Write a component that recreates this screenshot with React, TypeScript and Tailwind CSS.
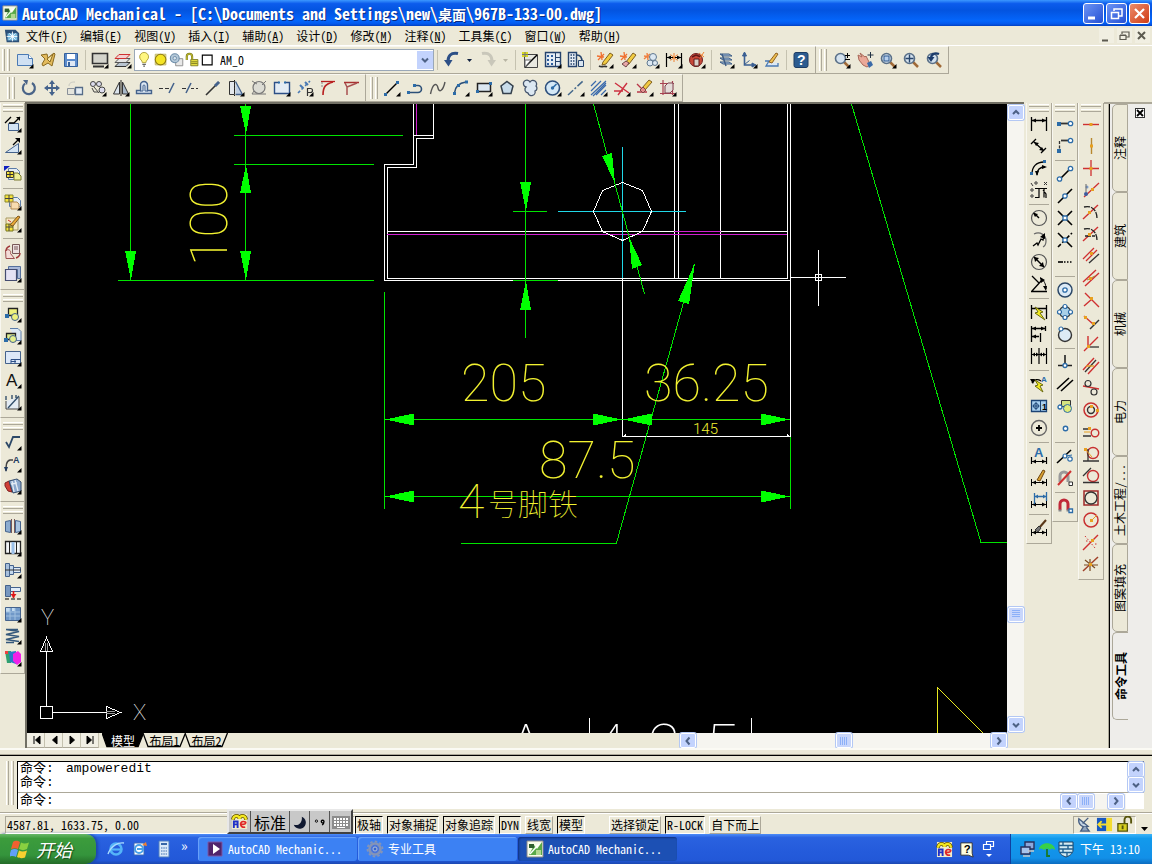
import React from 'react';

const N = '#29466b';
const B = '#4a7ab4';
const L = '#cfe0f2';
const K = '#000000';
const R = '#cf3030';
const O = '#e8a020';
const Y = '#f6e23c';
const W = '#ffffff';

type Shape = [d: string, stroke?: string, fill?: string, width?: number, dash?: string];
type IconDef = { s: Shape[]; fly?: boolean; t?: [string, number, number, number, string, string?] };

const c = (x: number, y: number, r: number) =>
  `M${x - r} ${y}a${r} ${r} 0 1 0 ${2 * r} 0a${r} ${r} 0 1 0 ${-2 * r} 0z`;
const q = (x: number, y: number, w: number, h: number) => `M${x} ${y}h${w}v${h}h${-w}z`;

const NO = 'none';
const lens: Shape[] = [
  ['M11 11l5 5', '#a06a38', NO, 2.5],
  [c(7.5, 7.5, 5), '#5a7088', '#d4e2ee', 1.6],
];
const dimBar: Shape[] = [['M1.5 10v7M16.5 10v7M2 13.5h14', K], ['M2 13.5l4-2v4zM16 13.5l-4-2v4z', NO, K]];

const ICONS: Record<string, IconDef> = {
  new: { s: [['M1.5 3.5h11l4 4v7h-15z', B, L], ['M12.5 3.5v4h4', B, W]], fly: true },
  open: { s: [['M2 4l6-1 1 4 6-5 1 1-3 12-4-3-5 3-1-2 3-5z', '#8a6a20', '#e2ba5c'], ['M8 8l6-5-3 8z', '#8a6a20', '#fbe9a8']] },
  save: { s: [[q(2.5, 2.5, 13, 13), '#34609c', '#5c8ccc'], [q(5, 3, 8, 5), NO, W], [q(5, 10, 8, 5), NO, '#dfe8f4'], [q(6, 11, 2, 4), NO, '#34609c']] },
  monitor: { s: [[q(1.5, 2.5, 15, 10), '#333', '#d4d4cc', 1.6], ['M2 15.5h11', '#333', NO, 2]], fly: true },
  layers: { s: [['M5 11.5h11l-4 4h-11z', '#333', '#b8c4d0'], ['M5 7.5h11l-4 4h-11z', '#555', '#e4e4e4'], ['M5 3.5h11l-4 4h-11z', R, '#f2d0d0']], fly: true },
  bulb: { s: [['M6 12c0-3-3-3-3-6.500a5 5 0 0 1 10 0c0 3.500-3 3.500-3 6.500z', '#a89a30', '#fff680'], ['M6 14h4M7 16h2', '#666', NO, 1.4]] },
  sun: { s: [[q(2.5, 2.5, 12, 12), '#b8b060', '#f2eeb0'], [c(8.5, 8.5, 6), '#907c10', '#f4e424', 1.2]] },
  freeze: { s: [[q(7.5, 7.5, 8, 8), '#888', '#e8e8e8'], [c(6.5, 7, 5), '#6c8ca8', '#b4c8d8', 1.2], [c(6.5, 7, 2), '#6c8ca8', '#d8e4ec']] },
  lock: { s: [['M2 9V5a3 3 0 0 1 6 0v3', '#7a7a20', NO, 2.4], ['M2 9V5a3 3 0 0 1 6 0v3', '#d8d030', NO, 1], [q(6.5, 8.5, 8, 7), '#7a7a20', '#e8e040'], ['M7 11h7M7 13h7', '#7a7a20']] },
  box: { s: [[q(1.5, 3.5, 11, 11), K, W, 1.3]] },
  undo: { s: [['M15 2.500C8 1 4.500 5 5 12', '#2c4f86', NO, 3], ['M1 9h8.500l-4 6.500z', NO, '#2c4f86']] },
  redo: { s: [['M3 2.500C10 1 13.500 5 13 12', '#c9c7ba', NO, 3], ['M17 9H8.500l4 6.500z', NO, '#c9c7ba']] },
  match: { s: [[q(3.5, 3.5, 13, 13), '#444', '#e8e8e0'], ['M4 16L16 4', K, NO, 1.4], [q(1, 1, 6, 5), NO, '#d8d820'], ['M4 1v5M1 3.500h6', '#777'], ['M4 16v-7l6 0z', '#666', W]] },
  grid: { s: [[q(1.5, 1.5, 15, 14), '#24426c', '#e4ecf4', 1.4], ['M3 4h2v2h-2zM7 4h2v2h-2zM3 8h2v2h-2zM7 8h2v2h-2zM3 12h2v2h-2zM7 12h2v2h-2z', NO, '#2c5c9c'], ['M11.500 2v13M12 6.500h4M12 10.500h4', '#24426c']], fly: true },
  gridcopy: { s: [[q(1.5, 1.5, 8, 14), '#24426c', '#e4ecf4', 1.4], ['M3.500 4h4M3.500 7h4M3.500 10h4M3.500 13h4', '#24426c', NO, 1.4, '1.5 1'], ['M10 4c4 0 5 3 5 7', '#24426c', NO, 1.6], [q(11.5, 9.5, 5, 6), '#24426c', '#d8e4f0']] },
  pencil1: { s: [['M1 5l7 1M5 1l1 8M2 9l6-6', '#f07030', NO, 1.3], ['M3 15c3 2 6-1 8 1', '#333', NO, 1.6], ['M7 11l7-9 3 2-7 9-4 1z', '#806020', '#f2cc40']], fly: true },
  pencil2: { s: [['M1 5l7 1M5 1l1 8M2 9l6-6', '#f07030', NO, 1.3], ['M7 11l7-9 3 2-7 9-4 1z', '#806020', '#f2cc40'], ['M3 13l4-3 3 2-3 4z', '#704848', '#e8a8a8']], fly: true },
  burst: { s: [['M2 5l6 1M5 2l1 7M2 8l6-5', '#f08040', NO, 1.4], [c(11, 6, 3.5), '#607890', '#dce8f2'], [c(8, 12, 3), '#607890', '#dce8f2'], [c(13, 12, 2.5), '#607890', '#dce8f2']], fly: true },
  dimedit: { s: [['M1.500 2v14M16.500 2v14M2 6.500h14', K, NO, 1.2], ['M2 6.500l4-2v4zM16 6.500l-4-2v4z', NO, K], ['M9 2v9M5.500 3.500l7 6M12.500 3.500l-7 6', '#f08030']], fly: true },
  cube: { s: [[c(8, 9, 6.5), '#702020', '#c84838'], ['M6 8h5v7H6z', '#601818', '#d8d0c8'], ['M4 6l4-2 5 2', '#601818', NO, 1.4], ['M11 2l5 4M16 1l-4 6', '#f08030']], fly: true },
  stack: { s: [['M3 3h9l3 2h-9zM3 7h9l3 2h-9zM3 11h9l3 2h-9z', '#3c5c84', '#a8c0dc'], ['M5 3l4 12', '#3c5c84', NO, 1.4]], fly: true },
  axes: { s: [['M4.500 2v12l9 0', '#3a5f92', NO, 1.6], ['M4.500 1l-2 4h4zM16 14l-4-2v4zM4.500 13.500l5-4', '#3a5f92', '#3a5f92']], fly: true },
  sketch: { s: [['M2 10h4l-3 5h12v-3', '#4a7ab4', '#dce8f4', 1.3], ['M6 11l7-9 2 1-6 9z', '#906020', '#eec050']] },
  help: { s: [['M2 3.500a2 2 0 0 1 2-2h10a2 2 0 0 1 2 2v11a2 2 0 0 1-2 2H4a2 2 0 0 1-2-2z', '#1c3c64', '#2c5c90']], t: ['?', 5, 14, 14, W] },
  zoomrt: { s: [...lens, ['M14.500 2v5M12 4.500h5M12 8.500h5', K]], fly: true },
  pan: { s: [['M2 4l4 2-2-4 5 4 1-1 3 6 1 3-3 2-4-2-4-5z', '#a86858', '#eaa898'], ['M11 12l4-2 2 4-4 3z', NO, '#3a6aa8'], ['M14.500 1v6M11.500 4h6', '#234']] },
  zoomwin: { s: [...lens, [q(5, 5, 5, 5), '#2c5890', '#b8d0ec']], fly: true },
  zoomall: { s: [...lens, ['M7.500 3.500v8M3.500 7.500h8', N, NO, 1.4]] },
  zoomprev: { s: [...lens, ['M14 3C9 1 6 4 6 7', '#1c3c6c', NO, 2.4], ['M2.500 6h7l-3.500 5z', NO, '#1c3c6c']] },

  rotate: { s: [['M5 4.500a6 6 0 1 0 7-.5', '#4a6488', NO, 2.2], ['M3 1l5 0-1 5z', NO, '#4a6488']] },
  move: { s: [['M9 3v12M3 9h12', '#44628c', NO, 1.8], ['M9 1l-3 4h6zM9 17l-3-4h6zM1 9l4-3v6zM17 9l-4-3v6z', NO, '#44628c']] },
  copyobj: { s: [[q(1.5, 9.5, 7, 6), '#888f98', '#e4e4dc'], [q(9.5, 8.5, 7, 7), '#566c88', '#e4ecf4', 1.3], ['M3 7c0-3 2-4 6-4', '#c8c8c0']] },
  array: { s: [[c(4, 5, 2.5), '#444', '#dde'], [c(10, 5, 2.5), '#444', '#dde'], [c(13, 11, 3), '#444', '#dde'], ['M5 8l5 6M3 9l2 4h4', '#444']], fly: true },
  mirror: { s: [['M7.500 3v12h-6z', '#333', '#dce4ec'], ['M10.500 3v12h6z', '#333', '#a8b8c8'], ['M9 1v16', '#222']], fly: true },
  offset: { s: [['M1.500 14.500h15v-3h-4V6a3.500 3.500 0 0 0-7 0v5.500h-4z', '#44628c', '#dce8f4', 1.4], ['M5 12h3V7a1 1 0 0 1 2 0v5h3', '#44628c']] },
  trim: { s: [['M1 9.500h4M7 9.500h4', '#333'], ['M11 14L16 4', '#44628c', NO, 1.6]] },
  extend: { s: [['M1 9.500h4M10 9.500h3M15 9.500h2', '#333'], ['M5 14L10 4', '#44628c', NO, 1.6]] },
  lengthen: { s: [['M2 16L15 3', '#333', NO, 1.6], ['M11 7l4-4', '#44628c', NO, 3]] },
  stretch: { s: [['M2.500 2.500v13h5v-13z', '#333', '#e4e8ec'], ['M8.500 2.500l7 13h-7', '#44628c', '#c0d0e4', 1.3], ['M7.500 1v16', '#222', NO, 1, '1.5 1.5']], fly: true },
  scale: { s: [[c(9, 8.5, 6), '#777', '#dcdcd4', 1.2], ['M2 2l5 3M16 2l-4 4M2 15l14 0M4 12l-2 3', '#777']] },
  breakat: { s: [['M6 3.500h-4.500v11h15v-11H12', '#2c4f86', '#e4ecf4', 1.4], [q(5, 2.5, 2, 2), NO, '#2c6ca8'], [q(11, 2.5, 2, 2), NO, '#2c6ca8']], fly: true },
  join: { s: [['M2 14L14 2', '#4a7ab4', NO, 1.6, '3 2'], ['M4 6l3 3M9 3l3 3', '#4a7ab4', NO, 2], ['M11.500 17V9.500h3a2 2 0 0 1 0 4h-3', '#333', NO, 1.2]], fly: true },
  chamfer: { s: [['M2 2.500h14', '#b82020', NO, 1.3], ['M4 16C4 7 7 5 14 3', '#b82020', NO, 1.6], ['M3 3v5', '#888', NO, 1, '2 1']] },
  fillet: { s: [['M2 3.500h15', '#a83030', NO, 1.5], ['M5 16V8L15 4M5 8L3 4', '#a85050', NO, 1.5]] },
  line: { s: [['M3 15L14 4', K, NO, 1.5], [q(1, 14, 3, 3), NO, '#2c6ca8'], [q(13, 2, 3, 3), NO, '#2c6ca8']], fly: true },
  pline: { s: [['M3 13.500h9a3.500 3.500 0 0 0 0-7H9', '#2c5078', NO, 1.6], [q(1, 12, 3, 3), NO, '#2c6ca8'], [q(7, 5, 3, 3), NO, '#2c6ca8']] },
  spline: { s: [['M1.500 15C4 3 8 4 9 9s5 3 7-6', '#555', NO, 1.4]] },
  arc: { s: [['M2.500 14C3 8 7 4 14 3', '#2c5078', NO, 1.6], [q(1, 13, 3, 3), NO, '#2c6ca8'], [q(5, 5, 3, 3), NO, '#2c6ca8'], [q(13, 1.5, 3, 3), NO, '#2c6ca8']], fly: true },
  rect: { s: [[q(2.5, 4.5, 13, 8), '#222', '#dce8f2', 1.5], [q(1, 11, 3, 3), NO, '#2c6ca8'], [q(14, 3, 3, 3), NO, '#2c6ca8']], fly: true },
  polygon: { s: [['M9 2.500l6 4.500-2 7.500H5L3 7z', '#34404c', '#c8dcea', 1.5]] },
  cloud: { s: [['M5 8a3.500 3.500 0 1 1 4-5 3.500 3.500 0 0 1 6 4 3 3 0 0 1-1 5 3.500 3.500 0 0 1-7 2 3.500 3.500 0 0 1-2-6z', '#44546c', '#dce8f2', 1.3]] },
  circle: { s: [[c(8.5, 9, 7), '#2c4f7c', '#d4e8f6', 1.6], [c(8.5, 9, 1.7), NO, '#2c6ca8'], ['M8.500 9l4-4', '#2c6ca8', NO, 1.6]], fly: true },
  axis: { s: [['M1 16L16 2', '#44688c', NO, 1.5, '7 2 2 2']], fly: true },
  hatch: { s: [['M1 7l5-5M1 12L11 2M1 16L16 2M6 16L16 6M11 16l5-5M3 17L16 4', '#3a6aac', NO, 1.2]], fly: true },
  ray: { s: [['M2 4l14 10M5 16L14 4M1 12l9 0', '#cc3040', NO, 1.4]], fly: true },
  erase: { s: [['M1 13h10M1 5l5 5', '#b83848', NO, 1.4], ['M6 9l7-8 3 2-7 8z', '#806020', '#f2c840'], ['M4 11l3-3 3 3-3 3z', '#804848', '#e48c8c']], fly: true },
  region: { s: [['M4 1v15M1 4.500h14M13.500 2v14M1 14.500h15', '#a84050', NO, 1.2], ['M6 7l3-3h5v7l-3 3H6z', '#804050', '#e4dcd8']], fly: true },

  view1: { s: [[q(4.5, 8.5, 10, 7), '#44628c', '#d4e4f4'], ['M1 8l6-6M5 8h5l6-6', K, NO, 1.3], ['M12 2h4v4z', NO, K]], fly: true },
  view2: { s: [['M1.500 15.500l13-9v9z', '#44628c', '#d4e4f4'], ['M9 8l6-6', K, NO, 1.3], ['M11 1h5v5z', NO, K]], fly: true },
  block1: { s: [['M0 1h6l-6 5z', NO, '#1020c0'], ['M4.500 3.500h8l3 3v8h-11z', '#5c7ca8', '#e4ecf4'], [q(2.5, 6.5, 7, 6), '#333', Y], ['M6 6.500v6M2.500 9.500h7', '#333'], ['M10 8h4l3 3v4h-7z', '#7a7a30', '#eef09a']] },
  block2: { s: [['M5.500 4.500h8l3 3v6h-11z', '#5c7ca8', '#e4ecf4'], [q(1, 2, 8, 7), '#888830', Y], ['M5 2v7M1 5.500h8', '#444'], ['M7 9h6l2 2v5H7z', '#b08850', '#f8dcb0']], fly: true },
  block3: { s: [[q(2, 3, 12, 12), '#a89860', '#f4e8c4'], [q(2, 9, 7, 7), '#777720', Y], ['M5 9v7M2 12h7', '#444'], ['M6 10l8-9 2 1-7 9z', '#805820', '#e8a838'], ['M4 5l3 2', R]], fly: true },
  block4: { s: [[q(8.5, 1.5, 7, 9), '#785858', '#ece0e0'], ['M10 4h4M10 6h4', '#785858'], ['M1.500 7.500c3-2 6 0 5 3l4 5H2z', '#9c5050', '#f4dcd8'], ['M6 3c-3 1-4 3-4 5M12 15c3-1 4-2 4-5', '#a03838', NO, 1.4]] },
  frame: { s: [['M4.500 1.500h12v12h-3v-9h-9z', '#55709c', '#a8b8d8'], [q(1.5, 4.5, 11, 11), '#444c70', '#e4e2f4', 1.2]], fly: true },
  part1: { s: [[q(4.5, 3.5, 9, 7), '#222', '#eef07c', 1.3], [c(11, 12, 3.5), '#44628c', '#eef07c'], [q(1, 9, 4, 4), NO, '#2c6ca8']], fly: true },
  part2: { s: [['M6 1.500h8l3 3v9h-5', '#5c7ca8', '#dce8f4'], [q(2.5, 6.5, 9, 6), '#222', '#dcec90', 1.3], [c(9, 12, 3.5), '#44628c', '#e4f08c'], [q(0, 11, 4, 4), NO, '#2c6ca8']], fly: true },
  sheet: { s: [[q(1.5, 2.5, 15, 12), '#44628c', '#dce8f8'], ['M7 14.500v-4h9.500M11 10.500v4M7 12.500h5', '#2c4f86']], fly: true },
  text: { s: [], fly: true, t: ['A', 2, 15, 17, '#111', 'normal'] },
  dimset: { s: [['M2 8v8h13V4', '#444', '#e4ecf4'], ['M4 15L15 3M2 3v4M8 2v4M12 2v3', '#34506c', NO, 1.4]], fly: true },
  rough: { s: [['M2 9l3 5 4-10h7', '#2c4868', NO, 1.8]], fly: true },
  leader: { s: [['M2 16c0-5 0-10 4-11h3', '#444', NO, 1.4], ['M0 12h4l-2 5z', NO, '#223a60']], fly: true, t: ['A', 9, 8, 9, '#223a60'] },
  books: { s: [['M1 6l4-2 3 11-4-1-3-5z', '#802020', '#d04038'], ['M5 4l8-2 4 3v9l-8 2z', '#344c6c', '#8ca8cc'], ['M8 4l2 11M11 3l3 11M7 7l6-1', '#e4ecf4', NO, 1.3]], fly: true },
  shaft1: { s: [['M1.500 4.500l5-1v12l-5-1z', '#44628c', '#8cacd0'], ['M11.500 3.500l5 1v10l-5 1z', '#44628c', '#a8c4e0'], ['M7.500 2v14M10.500 2v14', '#785858']], fly: true },
  shaft2: { s: [['M1.500 2.500h15v12h-15z', '#222', '#f4f6f8', 1.3], ['M5.500 3v12M12.500 3v12', '#222'], ['M9 3v12', '#9cc0e8', NO, 3]], fly: true },
  shaft3: { s: [[q(1.5, 2.5, 4, 13), '#44628c', '#a8c0dc'], [q(5.5, 4.5, 4, 9), '#44628c', '#c4d8ec'], [q(9.5, 6.5, 7, 5), '#44628c', '#e0ecf8'], ['M1 9h16', '#333']], fly: true },
  shaft4: { s: [[q(1.5, 2.5, 5, 11), '#44628c', '#7898c0'], [q(6.5, 4.5, 10, 4), '#44628c', '#e0ecf8'], ['M9.500 8v7', '#e01818', NO, 1.6], ['M6.500 11h6l-3 4z', NO, '#e01818'], ['M1 16h16', K, NO, 1.2, '4 2']] },
  surface: { s: [[q(1.5, 2.5, 15, 13), '#44628c', '#7098c8'], ['M2 3h4v4h-4zM8 3h3v3h-3z', NO, '#c4dcf0'], ['M2 7h14M2 11h14M6 3v12M11 3v12', '#a0c0e0']], fly: true },
  spring: { s: [['M2 2.500l13 2-13 3 13 2-13 3 13 2M2 2.500h12M2 15.500h8', '#34587c', NO, 1.6]], fly: true },
  fea: { s: [['M1 2h6v12H3z', NO, '#30a070'], ['M5 3l7-1v13l-6-2z', NO, '#2878c8'], ['M9 5l5-3 3 3v8l-4 3-4-4z', NO, '#f020e8'], ['M1 2h3v3H1z', NO, '#f04040']], fly: true },

  dlin: { s: [['M1.500 2v14M16.500 2v14M2 5.500h14', K, NO, 1.3], ['M2 5.500l4-2v4zM16 5.500l-4-2v4z', NO, K]] },
  dali: { s: [['M4 5l10 9M1 7l5-5M11 16l5-5', K, NO, 1.3], ['M4 5l5 1-3 3zM14 14l-5-1 3-3z', NO, K]] },
  darc: { s: [['M2 15C2 8 6 3 14 3M7 16c0-5 3-8 8-8', K, NO, 1.3], ['M17 8l-5-2v4zM7 17l-2-5h4z', NO, K], [q(0, 13, 3, 3), NO, '#2c6ca8'], [q(13, 1, 3, 3), NO, '#2c6ca8']] },
  dord: { s: [['M5 16.500h4v-9h5v9M5 7.500h12M16 17v-4l-3-4', K, NO, 1.2], [c(2, 9, 1.2), '#333'], [c(2, 15, 1.2), '#333'], [c(6, 2, 1.2), '#333'], ['M1 2l2 3M14 1l3 3M17 1l-3 3', '#333']] },
  drad: { s: [[c(9, 9, 7.5), '#555', NO, 1.2], ['M4 4l5 5', K, NO, 1.4], ['M3 4l5 1-3 3z', NO, K]] },
  djog: { s: [['M4 3c6-3 12 1 12 7 0 3-1 5-3 6', '#666', NO, 1.2], ['M3 15l4-3 1 2 3-6 2 1 1-4', K, NO, 1.3], ['M15 2l-5 4 5 2z', NO, K]] },
  ddia: { s: [[c(9, 9, 7.5), '#555', NO, 1.2], ['M4 4l10 10', K, NO, 1.4], ['M4 4l5 1-4 4zM14 14l-5-1 4-4z', NO, K]] },
  dang: { s: [['M12 5L2 16M1 16.500h16M2 1l7 7', K, NO, 1.3], ['M10 3c4 2 6 6 6 11', K], ['M10 2l5 3-4 3zM16 16l-3-5h4z', NO, K]] },
  dquick: { s: [['M1.500 2v14M16.500 2v14M2 5.500h14', K, NO, 1.3], ['M5 4l8 5-3 1 5 7-10-7 3-1z', '#6a6a10', '#f4ec20']] },
  dbase: { s: [['M1.500 1v16M2 3.500h13M15.500 1v5M2 11.500h7M10.500 8v9', K, NO, 1.3], ['M2 3.500l4-2v4zM15 3.500l-4-2v4zM2 11.500l4-2v4z', NO, K]] },
  dcont: { s: [['M1.500 1v16M9 1v16M16.500 1v16M2 7.500h14', K, NO, 1.2], ['M2 7.500l3-2v4zM9 7.500l-3-2v4zM9 7.500l3-2v4zM16 7.500l-3-2v4z', NO, K]] },
  dlead: { s: [['M2 8c2-4 6-4 9-2', K, NO, 1.3], ['M0 4h5l-2 5z', NO, K], ['M5 5l8 5-3 1 3 6-8-6 3-1z', '#6a6a10', '#f4ec20']], t: ['A', 11, 7, 8, '#2c6ca8'] },
  dtol: { s: [[q(1.5, 3.5, 15, 11), '#1c4474', '#a8d0f0', 1.3], ['M10.500 4v10', '#1c4474'], [c(6, 9, 2.5), '#1c4474'], ['M6 5v8M2.500 9h7', '#1c4474']], t: ['1', 12, 13, 9, K] },
  dcen: { s: [[c(9, 9, 7.5), '#666', NO, 1.4], ['M9 6v6M6 9h6', K, NO, 1.8]] },
  dtext: { s: [['M1.500 10v7M16.500 10v7M2 14.500h14', K, NO, 1.2], ['M2 14.500l4-2v4zM16 14.500l-4-2v4z', NO, K]], t: ['A', 4, 10, 13, '#2c6ca8'] },
  dpen: { s: [...dimBar, ['M7 11l6-10 2 1-5 10z', '#704810', '#d8a030']] },
  dupd: { s: [...dimBar, ['M4.500 2v11M16.500 1v9M5 5.500h11', '#2c6ca8', NO, 1.3], ['M5 5.500l3-2v4zM16 5.500l-3-2v4z', NO, '#2c6ca8']] },
  dsty: { s: [...dimBar, ['M9 9l7-8', '#5a3818', NO, 2], ['M5 11l4-4 2 2-3 4z', '#333', '#777']] },

  sfrom: { s: [['M3 8.500h9', '#333', NO, 1.8], [q(1, 7, 4, 4), NO, '#2c6ca8'], [c(14.5, 8.5, 2.2), '#2c6ca8', W, 1.3]] },
  strack: { s: [['M5 3.500h8', '#333', NO, 1.8], ['M3.500 4v10', '#333', NO, 1.3, '3 1.5'], [q(1, 12, 4, 4), NO, '#2c6ca8'], [c(14.5, 3.5, 2.2), '#2c6ca8', W, 1.3]] },
  send: { s: [['M4 14L14 4', K, NO, 1.6], [c(3.5, 14, 2.2), '#2c6ca8', W, 1.3], [c(14.5, 3.5, 2.2), '#2c6ca8', W, 1.3]] },
  smid: { s: [['M2 16L16 2', K, NO, 1.6], [c(9, 9, 2.2), '#2c6ca8', W, 1.3]] },
  sint: { s: [['M2 2l14 14M2 16L16 2', K, NO, 1.6], [q(7, 7, 4, 4), '#2c6ca8', W, 1.3]] },
  sapp: { s: [['M2 2l14 14', K, NO, 1.6], ['M2 16L16 2', K, NO, 1.6, '4 2'], [c(9, 9, 2.2), '#2c6ca8', W, 1.3]] },
  sext: { s: [['M2 9h5', K, NO, 1.6], ['M8 9h9', K, NO, 1.6, '1.5 1.5']] },
  scen: { s: [[c(9, 9, 7), '#2c4868', '#dceaf6', 1.5], [c(9, 9, 2.2), '#2c6ca8', W, 1.3]] },
  squa: { s: [[c(9, 9, 5.5), '#333', '#a8d0e8', 1.3], [c(9, 3.5, 2), '#2c6ca8', W, 1.2], [c(9, 14.5, 2), '#2c6ca8', W, 1.2], [c(3.5, 9, 2), '#2c6ca8', W, 1.2], [c(14.5, 9, 2), '#2c6ca8', W, 1.2]] },
  stan: { s: [[c(9, 10, 6.5), '#333', '#dceaf6', 1.4], [c(5, 4, 2), '#2c6ca8', W, 1.2]] },
  sper: { s: [['M2 12.500h14M9 2v10', '#222', NO, 1.6], [c(9, 12.5, 2), '#2c6ca8', W, 1.3]] },
  spar: { s: [['M1 14L13 3M5 16L17 5', K, NO, 1.6]] },
  sins: { s: [[q(5.5, 3.5, 9, 6), '#333', '#d4e480'], [c(11.5, 11.5, 4), '#2c6ca8', '#e0ec78'], [c(4, 10, 2), '#2c6ca8', W, 1.3]] },
  snod: { s: [[c(9.5, 9.5, 2.2), '#2c6ca8', W, 1.4]] },
  snea: { s: [['M1 16L15 3', K, NO, 1.6], [c(9, 9, 2), '#2c6ca8', W, 1.2], [c(14, 12, 2.2), '#2c6ca8', W, 1.2], ['M10 9l6-1', '#2c6ca8']] },
  snon: { s: [['M4 13V7a4 4 0 0 1 8 0v6', '#9a9a9a', NO, 3], ['M2 16L15 2', R, NO, 2], [q(13, 13, 3.5, 3.5), '#333', W]] },
  sset: { s: [['M4 13V7a4 4 0 0 1 8 0v6', '#c02838', NO, 3], ['M2.500 13.500h3M10.500 13.500h3', '#888', NO, 2], [q(13, 12, 3.5, 3.5), '#2c6ca8', W, 1.3]] },

  h1: { s: [['M1 9.500h16', R, NO, 1.4], [q(7.5, 8, 3, 3), NO, O]] },
  h2: { s: [['M9.500 1v16', '#b88830', NO, 1.4], [q(8, 7.5, 3, 3), NO, O]] },
  h3: { s: [['M9 1v16M1 9.500h16', R, NO, 1.3], [q(7.5, 8, 3, 3), NO, O]] },
  h4: { s: [['M2 16L17 2', R, NO, 1.3], [c(4, 13, 2), NO, '#3c5ca0'], [c(5, 6, 1.5), NO, '#7a9ac8'], [q(9, 7, 3, 3), NO, O], ['M4 3v8', '#666']] },
  h5: { s: [['M1 16L16 2', R, NO, 1.4], ['M2 4c8-2 13 3 13 12', '#222', NO, 1.3, '6 1'], [q(6, 8, 3, 3), NO, O]] },
  h6: { s: [['M1 16L16 2', R, NO, 1.4], ['M2 4c8-2 13 3 13 12M3 11h10', '#222', NO, 1.3, '6 1'], [q(6, 8, 3, 3), NO, O]] },
  h7: { s: [['M1 12L12 1M4 14L15 3', R, NO, 1.3], ['M7 16l10-9', '#333', NO, 1.3], [q(8, 5, 3, 3), NO, O]] },
  h8: { s: [['M1 13L14 1M3 17L17 4', R, NO, 1.4], ['M5 11l8-4', '#a88030'], [q(7, 8, 3, 3), NO, O]] },
  h9: { s: [['M2 15L10 8M3 2l14 14', R, NO, 1.4], [q(8, 6, 3, 3), NO, O]] },
  h10: { s: [['M2 3l9 8', R, NO, 1.4], ['M8 16l9-9', '#333', NO, 1.4], [q(2, 3, 3, 3), NO, O], [q(10, 9, 3, 3), NO, O]] },
  h11: { s: [['M2 16L16 2M6 1v11', R, NO, 1.4], ['M6 12h11', '#333', NO, 1.3], [q(5, 10, 3, 3), NO, O]] },
  h12: { s: [['M1 13L12 1M6 17L17 5', R, NO, 1.4], ['M3 15L14 3', '#333', NO, 1.3], ['M4 9h8', O, NO, 1.3]] },
  h13: { s: [['M1 7l16 3', R, NO, 1.3], [c(6, 4.5, 3), '#333', NO, 1.2], [c(12, 13, 3), '#333', NO, 1.2]] },
  h14: { s: [[c(9, 9, 7), '#c83030', NO, 1.5], [c(9, 9, 3.5), '#333', NO, 1.4], [q(14, 8, 3, 3), NO, O], [q(8, 4, 3, 3), NO, O]] },
  h15: { s: [[c(13, 10, 3.8), '#c83030', NO, 1.4], ['M1 6h8M1 13h8', '#333', NO, 1.3], [q(6, 4, 3, 3), NO, O], ['M2 9h6', O]] },
  h16: { s: [[c(11, 8, 5.5), '#c83030', NO, 1.4], ['M1 16h16M6 4v12', '#333', NO, 1.3], [q(2, 3, 3, 3), NO, O], ['M3 4l7 8', O]] },
  h17: { s: [[c(11, 9, 5.5), '#c83030', NO, 1.4], ['M1 15.500h16M1 9l8-8', '#333', NO, 1.3]] },
  h18: { s: [[q(2, 2, 14, 14), '#a02828', NO, 1.5], [c(9, 9, 6), '#333', NO, 1.3]] },
  h19: { s: [[c(9, 9, 7), '#c83030', NO, 1.5], [q(8, 8, 3, 3), NO, O], ['M11 8l4-4', O]] },
  h20: { s: [['M1 17L16 2', R, NO, 1.4], ['M3 3l10 12M13 11h3M4 8h2', R, NO, 1, '1.5 2'], [q(9, 6, 3, 3), NO, O]] },
  h21: { s: [['M1 16L16 2', '#a04028', NO, 1.5], ['M3 5l10 8M2 10h14M8 4v12', '#7a4a20', NO, 1.2], [q(7, 8, 3, 3), NO, O]] },

  acad: { s: [[q(1, 1, 16, 16), '#888', '#f8fce8'], ['M3 15L8 5l3 4 5-7v13z', NO, '#58a848'], ['M3 4h5v4H3z', NO, '#306030'], ['M10 10h5v5h-5z', NO, '#b0d890'], ['M4 14l9-10', '#fff', NO, 1.3]] },
  doc: { s: [['M1 2h12l4 4v10H3z', NO, '#2c5078'], ['M4 6h11v8H4z', NO, '#7cbce0'], ['M9.500 4v11M3 9.500h12M6 6l7 7M13 6l-7 7', W]] },
  ie: { s: [[c(9, 9, 5.5), '#54b4f8', NO, 2.6], ['M4 9.500h10', '#54b4f8', NO, 2.2], ['M1 14C4 6 11 2 17 3', '#a8dcff', NO, 1.4]] },
  outlook: { s: [['M3 3h10v12H3z', '#3868b8', W], [c(8, 9, 4), '#48a0e8', NO, 2], ['M6 9h5', '#48a0e8', NO, 2], ['M11 5l4-3 1 4z', NO, '#f08030']] },
  calc: { s: [[q(4, 1, 10, 16), '#5080c0', '#dceaf8'], ['M6 4h6', '#3868a8', NO, 2], ['M6 8h6M6 11h6M6 14h6', '#7098c8', NO, 1.4, '1.5 .8']] },
  play: { s: [[q(2, 2, 14, 14), '#7858a8', '#50246c'], ['M7 4l7 5-7 5z', NO, W]] },
  gear: { s: [[c(9, 9, 5.5), '#8494b8', '#4a74d8', 2.6], [c(9, 9, 7.5), '#8494b8', NO, 1.8, '2.5 2.2'], [c(9, 9, 2), '#b0c0e0', '#3864c8']] },
  ime: { s: [[q(1, 1, 16, 16), NO, '#f0eccc'], ['M3 16V9l4 0v7M3 12h4', '#2030c8', NO, 2], ['M15 15c-6 1-6-6-2-6s3 3 0 3h-3', '#e02828', NO, 1.8], ['M2 7c1-5 6-5 7-1 1-4 6-4 7 1', '#605000', NO, 4], ['M2 7c1-5 6-5 7-1 1-4 6-4 7 1', '#f4e820', NO, 2.4]] },
  ask: { s: [['M3 2h12v11l1 4-5-2H3z', '#333', '#fffde0']], t: ['?', 6, 13, 12, K] },
  restore: { s: [[q(6.5, 1.5, 7, 5), W, NO, 1.2], [q(3.5, 4.5, 7, 5), W, '#245edb', 1.2], ['M6 14h6l-3 3z', NO, W]] },
  net: { s: [[q(6, 2, 9, 7), '#28305c', '#8ca8dc', 1.4], [q(2, 7, 9, 7), '#28305c', '#a8c4ec', 1.4], ['M4 16h7M9 11h6', '#c8c8c8', NO, 1.6]] },
  umbrella: { s: [['M1 10C1 1 17 1 17 10c-2-2-4-2-5 0-2-2-4-2-6 0-2-2-4-2-5 0z', NO, '#38d048'], ['M9 9v7h3', '#187828', NO, 1.8]] },
  shield: { s: [['M2 2h14v8c0 4-4 6-7 7-3-1-7-3-7-7z', '#1c3c5c', '#d4ecf4'], ['M2 5.500h14M2 9h14M3 12.500h12M6 2v3M11 5.500v3.500M6 9v3.500M10 12.500v4', '#206090', NO, 1.4]] },
  dish: { s: [['M3 3c-1 6 4 10 10 8z', '#445c80', '#c4d4e4', 1.4], ['M7 8l6-6', '#445c80', NO, 1.4], ['M8 11l-3 5h9l-3-4', '#445c80', '#90a4bc', 1.4]] },
  swap: { s: [[q(1, 2, 10, 14), NO, '#1858c0'], [q(11, 2, 6, 14), NO, '#f4dc30'], ['M3 9h9M6 5.500L2.500 9 6 12.500', '#f4dc30', NO, 2]] },
  padlock: { s: [['M9 8V4a3.500 3.500 0 0 1 7 0v4', '#56540c', NO, 2], [q(2, 8, 10, 8), '#56540c', '#d8d020', 1.4], ['M7 10v4', '#56540c', NO, 2]] },
  moon: { s: [['M11 3a7 7 0 1 1-9 9c5 2 10-2 9-9z', NO, '#101830']] },
  comma: { s: [[c(5, 8, 1.3), K], ['M12 7a1.500 1.500 0 1 1-.1 0zM13.500 8.500c0 2-1 3-2 4', K, NO, 1.5]] },
  keys: { s: [[q(0, 3, 18, 13), NO, '#8c8c8c'], ['M2 6h14M2 9h14M2 12h14', W, NO, 1.8, '2 1'], ['M5 14.500h8', W]] },
};

function Icon({ name, size = 18 }: { name: string; size?: number }) {
  const def = ICONS[name];
  return (
    <svg width={size} height={size} viewBox="0 0 18 18" fill="none" aria-hidden="true" className="shrink-0">
      {def.s.map(([d, stroke = 'none', fill = 'none', width = 1, dash], i) => (
        <path key={i} d={d} stroke={stroke} fill={fill} strokeWidth={width} strokeDasharray={dash} />
      ))}
      {def.t && (
        <text x={def.t[1]} y={def.t[2]} fontSize={def.t[3]} fill={def.t[4]} fontWeight={def.t[5] ?? 'bold'} fontFamily="Liberation Sans, sans-serif">
          {def.t[0]}
        </text>
      )}
      {def.fly && <path d="M17.500 13v4.500H13z" fill="#000" />}
    </svg>
  );
}

function HTools({ items }: { items: string[] }) {
  return (
    <>
      {items.map((n, i) =>
        n === '|' ? (
          <span key={i} className="flex h-5 w-[6px] justify-center">
            <span className="w-px bg-[#c5c2b0]" />
          </span>
        ) : n === 'v' ? (
          <button key={i} type="button" aria-label="more" className="flex w-[13px] justify-center">
            <svg width="5" height="3" aria-hidden="true"><path d="M0 0h5L2.500 3z" fill={i > 2 ? '#b8b5a4' : '#102040'} /></svg>
          </button>
        ) : (
          <button key={i} type="button" aria-label={n} className="flex h-[23px] w-[23px] items-center justify-center">
            <Icon name={n} />
          </button>
        ),
      )}
    </>
  );
}

function HGrip() {
  return (
    <span className="flex h-[22px] gap-[2px]">
      <span className="w-[3px] border-r border-l border-r-[#aca899] border-l-white" />
      <span className="w-[3px] border-r border-l border-r-[#aca899] border-l-white" />
    </span>
  );
}

function HBar({ children }: { children: React.ReactNode }) {
  return (
    <div role="toolbar" className="flex items-center border-t border-r border-b border-t-[#f8f7f0] border-r-[#aca899] border-b-[#aca899] pr-[3px]">
      {children}
    </div>
  );
}

function VBar({ items, first = false }: { items: string[]; first?: boolean }) {
  return (
    <div role="toolbar" className="flex flex-col items-center border-r border-b border-l border-r-[#aca899] border-b-[#aca899] border-l-[#f8f7f0] pb-1">
      <span className={first ? 'flex h-[10px] w-5 flex-col justify-start gap-[2px] pt-px' : 'flex h-[13px] w-5 flex-col justify-start gap-[2px] pt-1'}>
        <span className="h-[3px] border-t border-b border-t-white border-b-[#aca899]" />
        <span className="h-[3px] border-t border-b border-t-white border-b-[#aca899]" />
      </span>
      {items.map((n, i) =>
        n === '|' ? (
          <span key={i} className="flex h-[6px] w-5 flex-col justify-center">
            <span className="h-px bg-[#aca899]" />
          </span>
        ) : (
          <button key={i} type="button" aria-label={n} className="flex h-[22px] w-6 items-center justify-center">
            <Icon name={n} />
          </button>
        ),
      )}
    </div>
  );
}

const CHEV: Record<string, string> = { up: 'M2 6l3-3 3 3', down: 'M2 3.500l3 3 3-3', left: 'M6.500 1.500L3.500 5l3 3.500', right: 'M3.500 1.500L6.500 5l-3 3.500' };

function ScrollBtn({ dir }: { dir: string }) {
  return (
    <button type="button" aria-label={`scroll ${dir}`} className="flex h-[15px] w-4 shrink-0 items-center justify-center rounded-[2px] border border-white bg-[#c3d3fd] shadow-[0_0_0_1px_#b4c8f4]">
      <svg width="10" height="10" viewBox="0 0 10 10" aria-hidden="true"><path d={CHEV[dir]} stroke="#4d6185" strokeWidth="2" fill="none" /></svg>
    </button>
  );
}

function Thumb({ vertical = false }: { vertical?: boolean }) {
  return (
    <span className="flex h-[15px] w-4 shrink-0 items-center justify-center rounded-[2px] border border-white bg-[#c8d6fb] shadow-[0_0_0_1px_#b4c8f4]">
      <svg width="8" height="8" viewBox="0 0 8 8" aria-hidden="true">
        <path d={vertical ? 'M0 .5h8M0 2.500h8M0 4.500h8M0 6.500h8' : 'M.5 0v8M2.500 0v8M4.500 0v8M6.500 0v8'} stroke="#8cb0f8" />
      </svg>
    </span>
  );
}

const GREEN_LINES =
  'M130.500 104V280M118 280.500H374M245.500 104V280M234 135.500H403M234 164.500H374M525.500 104V338M513 211.500H547M513 280.500H558M384.500 292V509M385 419.500H790M385 496.500H790M790.500 437V509M461 543.500H617M981 542.500H1007';
const GREEN_SLOPES = 'M593.500 104L644.500 294M616.500 543L694 265M851.500 104L981 542.500';
const ARROWS =
  'M125 251h11l-5 29zM240 106h11l-5 28zM240 193h11l-5-28zM240 251h11l-5 29zM520 182h11l-5 29zM520 310h11l-5-29zM602 156l10-3 3 30zM632 269l10-4-13-28zM678 301l11 3 6-41z' +
  'M385 419.500l29-6v12zM622 419.500l-29-6v12zM623 419.500l29-6v12zM790 419.500l-29-6v12zM385 496.500l29-6v12zM790 496.500l-29-6v12z';
const WHITE_LINES =
  'M413.500 104V164.500H384.500V280.500H790.500V104M433.500 104V138.500H416.500V167.500H387.500V278.500H787.500V104M414 135.500H433M387 231.500H787M674.500 104V278M678.500 104V278M720.500 104V278M622.500 278V437M790.500 280V437M622 436.500H790';

function Drawing() {
  return (
    <svg role="img" aria-label="drawing" className="block h-full w-full" fill="none">
      <g transform="translate(-27 -104)" shapeRendering="crispEdges">
        <path d={WHITE_LINES} stroke="#fff" />
        <path d="M416.500 104V135M387 234.500H787M674 231.500H721" stroke="#d020d0" />
        <path d="M622.500 147V278M558 211.500H686" stroke="#20d8e8" />
        <path d="M622.500 182.500l20 8 9 21-9 20-20 9-20-9-9-20 9-21z" stroke="#fff" />
        <path d={GREEN_LINES} stroke="#00e400" />
        <path d={GREEN_SLOPES} stroke="#00e400" />
        <path d={ARROWS} fill="#00ff00" />
        <path d="M623 436l3-2v3zM790 436l-3-2v3z" fill="#fff" />
        <path d="M791 277.500H846M818.500 250V306M815.500 274.500h6v6h-6z" stroke="#fff" />
        <path d="M937.500 733V687.500L983 733" stroke="#e8e820" />
        <path d="M40.500 706.500h12v12h-12zM46.500 706V651M53 712.500H106M46.500 637.500l-6 14h12zM120.500 712.500l-14-6v12z" stroke="#fff" />
        <path d="M45.500 643v8M47.500 643v8M106 711.500h9M106 713.500h9" stroke="#999" />
        <path d="M589.500 718V733M751.500 718V733" stroke="#fff" />
        <g fill="#f2f230" fontFamily="Roboto, sans-serif" fontWeight="100">
          <text x="461" y="401" fontSize="52">205</text>
          <text x="644" y="401" fontSize="52">36.25</text>
          <text x="539" y="478" fontSize="52">87.5</text>
          <text x="693" y="434" fontSize="15" fontWeight="300">145</text>
          <text x="458" y="518" fontSize="48">4</text>
          <text x="488" y="515" fontSize="30" fontFamily="Noto Sans CJK SC, sans-serif">号脚铁</text>
          <text transform="translate(227 266) rotate(-90)" fontSize="52">100</text>
        </g>
        <g fill="#fff" fontFamily="Roboto, sans-serif" fontWeight="100">
          <text x="41" y="625" fontSize="22">Y</text>
          <text x="133" y="720" fontSize="22">X</text>
          <text x="508" y="766" fontSize="60">A</text>
          <text x="593" y="766" fontSize="60">4</text>
          <text x="648" y="766" fontSize="60">2</text>
          <text x="705" y="766" fontSize="60">5</text>
        </g>
      </g>
    </svg>
  );
}

const MENUS = [
  ['文件', 'F'], ['编辑', 'E'], ['视图', 'V'], ['插入', 'I'], ['辅助', 'A'], ['设计', 'D'],
  ['修改', 'M'], ['注释', 'N'], ['工具集', 'C'], ['窗口', 'W'], ['帮助', 'H'],
];

const PALETTE = ['注释', '建筑', '机械', '电力', '土木工程/...', '图案填充', '命令工具'];

const STATUS: [string, boolean][] = [
  ['极轴', true], ['对象捕捉', true], ['对象追踪', true], ['DYN', true], ['线宽', false], ['模型', true],
];
const STATUS2: [string, boolean][] = [['选择锁定', false], ['R-LOCK', true], ['自下而上', false]];

function StatusBtn({ label, on }: { label: string; on: boolean }) {
  return (
    <button
      type="button"
      aria-pressed={on}
      className={
        on
          ? 'h-[18px] border border-t-black border-r-white border-b-white border-l-black px-px leading-4'
          : 'h-[18px] border border-t-white border-r-[#aca899] border-b-[#aca899] border-l-white px-px leading-4'
      }
    >
      {label}
    </button>
  );
}

function SheetTab({ label, active = false }: { label: string; active?: boolean }) {
  return (
    <button type="button" className={active ? 'relative -ml-px h-[15px] w-[42px] text-white' : 'relative -ml-px h-[15px] w-[43px] text-black'}>
      <svg className="absolute inset-0 h-full w-full" viewBox="0 0 43 15" preserveAspectRatio="none" aria-hidden="true">
        <path d="M0 0l5 13.500h32L42.500 0" fill={active ? '#000' : '#ece9d8'} stroke="#000" strokeWidth="1.300" />
      </svg>
      <span className="relative block leading-[13px]">{label}</span>
    </button>
  );
}

const NAV = ['M3 1v8M9 1v8L4.500 5z', 'M8 1v8L3.500 5z', 'M3 1v8l4.500-4z', 'M2 1v8l4.500-4zM8 1v8'];

function TaskBtn({ icon, label, active = false }: { icon: string; label: string; active?: boolean }) {
  return (
    <button
      type="button"
      className={
        active
          ? 'flex h-6 w-[159px] items-center gap-1 rounded-[3px] bg-[#1c50b4] px-2 text-white shadow-[inset_1px_1px_2px_#10307c]'
          : 'flex h-6 w-[159px] items-center gap-1 rounded-[3px] bg-[#3c81f3] px-2 text-white shadow-[inset_1px_1px_1px_#6ca4fa]'
      }
    >
      <Icon name={icon} />
      <span className="truncate">{label}</span>
    </button>
  );
}

export default function App() {
  return (
    <div className="flex h-screen flex-col overflow-hidden bg-[#ece9d8] font-['Noto_Sans_CJK_SC',sans-serif] text-[12px] leading-4 text-black [font-feature-settings:'hwid']">
      <header className="flex h-[26px] shrink-0 items-center gap-1 bg-[linear-gradient(180deg,#3c98ff_0%,#0c5cec_14%,#0354e0_40%,#0466fc_80%,#0458ec_92%,#0340c0_100%)] pr-[2px] pl-[2px]">
        <Icon name="acad" size={16} />
        <h1 className="grow text-[16px] leading-6 font-bold whitespace-pre text-white [text-shadow:1px_1px_0_#0a2a80]">
          AutoCAD Mechanical - [C:\Documents and Settings\new\<span className="text-[14px]">桌面</span>\967B-133-00.dwg]
        </h1>
        <div className="flex gap-[2px]">
          <button type="button" aria-label="minimize" className="h-[21px] w-[21px] rounded-[3px] border border-white bg-[linear-gradient(135deg,#6c94f4,#2450d4)]">
            <svg width="19" height="19" aria-hidden="true"><path d="M4 14h7" stroke="#fff" strokeWidth="3" /></svg>
          </button>
          <button type="button" aria-label="restore" className="h-[21px] w-[21px] rounded-[3px] border border-white bg-[linear-gradient(135deg,#6c94f4,#2450d4)]">
            <svg width="19" height="19" fill="none" aria-hidden="true"><path d="M7 7V5h8v7h-3M7 5h8" stroke="#fff" strokeWidth="1.500" /><path d="M4.500 8.500h7v6h-7zM4 8.500h8" stroke="#fff" strokeWidth="1.500" /></svg>
          </button>
          <button type="button" aria-label="close" className="h-[21px] w-[21px] rounded-[3px] border border-white bg-[linear-gradient(135deg,#ec8c6c,#d03c14)]">
            <svg width="19" height="19" aria-hidden="true"><path d="M5 5l9 9M14 5l-9 9" stroke="#fff" strokeWidth="2.200" /></svg>
          </button>
        </div>
      </header>

      <nav className="flex h-5 shrink-0 items-center border-b border-b-white pl-1">
        <Icon name="doc" size={16} />
        <div className="flex grow gap-3 pl-[6px]">
          {MENUS.map(([label, key]) => (
            <button key={key} type="button" className="whitespace-nowrap">
              {label}(<u>{key}</u>)
            </button>
          ))}
        </div>
        <div className="flex gap-[3px] pr-[2px]">
          {['M3 11.500h6', 'M5 5V3h7v5h-3M3 6.500h6v4H3zM3 6h6', 'M3 3l7 7M10 3l-7 7'].map((d, i) => (
            <button key={i} type="button" aria-label={['minimize drawing', 'restore drawing', 'close drawing'][i]} className="h-[15px] w-[15px] bg-[#f1efe2]">
              <svg width="13" height="13" fill="none" aria-hidden="true"><path d={d} stroke="#5c5a50" strokeWidth={i === 1 ? 1.2 : 2} /></svg>
            </button>
          ))}
        </div>
      </nav>

      <div className="flex h-7 shrink-0">
        <HBar>
          <span className="flex w-[13px] pl-[2px]"><HGrip /></span>
          <HTools items={['new', 'open', 'save', '|', 'monitor', 'layers']} />
          <div className="flex h-[22px] w-[300px] items-center border border-[#9aa8b8] bg-white pl-[2px]">
            {['bulb', 'sun', 'freeze', 'lock', 'box'].map((n) => (
              <Icon key={n} name={n} size={16} />
            ))}
            <div className="relative flex grow items-center">
              <select aria-label="layer" className="h-5 w-full appearance-none bg-transparent pl-[3px] outline-none">
                <option>AM_0</option>
              </select>
              <span className="pointer-events-none absolute right-0 flex h-[18px] w-4 items-center justify-center bg-[#c3d3fd]">
                <svg width="10" height="10" viewBox="0 0 10 10" aria-hidden="true"><path d={CHEV.down} stroke="#4d6185" strokeWidth="2" fill="none" /></svg>
              </span>
            </div>
          </div>
          <HTools items={['|', 'undo', 'v', 'redo', 'v', '|', 'match', 'grid', 'gridcopy', '|', 'pencil1', 'pencil2', 'burst', 'dimedit', 'cube', '|', 'stack', 'axes', 'sketch', '|', 'help']} />
        </HBar>
        <HBar>
          <span className="flex w-[14px] pl-[3px]"><HGrip /></span>
          <HTools items={['zoomrt', 'pan', 'zoomwin', 'zoomall', 'zoomprev']} />
        </HBar>
      </div>
      <div className="flex h-7 shrink-0">
        <HBar>
          <span className="flex w-[17px] pl-[7px]"><HGrip /></span>
          <HTools items={['rotate', 'move', 'copyobj', 'array', 'mirror', 'offset', 'trim', 'extend', 'lengthen', 'stretch', 'scale', 'breakat', 'join', 'chamfer', 'fillet']} />
        </HBar>
        <HBar>
          <span className="flex w-[14px] pl-1"><HGrip /></span>
          <HTools items={['line', 'pline', 'spline', 'arc', 'rect', 'polygon', 'cloud', 'circle', 'axis', 'hatch', 'ray', 'erase', 'region']} />
        </HBar>
      </div>

      <main className="flex min-h-0 grow">
        <aside className="w-[25px] shrink-0 pt-px">
          <VBar first items={['view1', 'view2', '|', 'block1', '|', 'block2', 'block3', '|', 'block4', 'frame']} />
          <VBar items={['part1', 'part2', 'sheet', 'text', 'dimset']} />
          <VBar items={['rough', 'leader', 'books']} />
          <VBar items={['shaft1', 'shaft2', 'shaft3', 'shaft4', 'surface', 'spring', 'fea']} />
        </aside>

        <section className="flex min-w-0 grow flex-col border-t-2 border-l-2 border-t-[#716f64] border-l-[#716f64]">
          <div className="flex min-h-0 grow">
            <div className="min-w-0 grow overflow-hidden bg-black">
              <Drawing />
            </div>
            <div className="flex w-[17px] flex-col items-center bg-[#f6f5f0] pt-px pb-px">
              <ScrollBtn dir="up" />
              <div className="grow-[485]" />
              <Thumb vertical />
              <div className="grow-[95]" />
              <ScrollBtn dir="down" />
            </div>
          </div>
          <div className="flex h-[15px] shrink-0 items-start pr-[17px]">
            {NAV.map((d, i) => (
              <button key={i} type="button" aria-label={['first', 'previous', 'next', 'last'][i]} className="flex h-[15px] w-[18px] items-center justify-center border-r border-b border-r-[#c5c2b0] border-b-[#aca899] bg-[#f1efe4]">
                <svg width="10" height="10" viewBox="0 0 10 10" aria-hidden="true"><path d={d} stroke="#000" strokeWidth="1" fill="#000" /></svg>
              </button>
            ))}
            <div className="flex pl-1">
              <SheetTab label="模型" active />
              <SheetTab label="布局1" />
              <SheetTab label="布局2" />
            </div>
            <div className="grow-[452] basis-0" />
            <div className="flex grow-[327] basis-0 items-center bg-[#f6f5f0]">
              <ScrollBtn dir="left" />
              <div className="grow" />
              <Thumb />
              <div className="grow" />
              <ScrollBtn dir="right" />
            </div>
          </div>
        </section>

        <div className="flex shrink-0 items-start pt-px pl-[2px]">
          <VBar first items={['dlin', 'dali', 'darc', 'dord', '|', 'drad', 'djog', 'ddia', 'dang', '|', 'dquick', 'dbase', 'dcont', '|', 'dlead', 'dtol', 'dcen', '|', 'dtext', 'dpen', 'dupd', '|', 'dsty']} />
          <VBar first items={['sfrom', 'strack', '|', 'send', 'smid', 'sint', 'sapp', 'sext', '|', 'scen', 'squa', 'stan', '|', 'sper', 'spar', 'sins', 'snod', '|', 'snea', 'snon', '|', 'sset']} />
          <VBar first items={['h1', 'h2', 'h3', 'h4', 'h5', 'h6', 'h7', 'h8', 'h9', 'h10', 'h11', 'h12', 'h13', 'h14', 'h15', 'h16', 'h17', 'h18', 'h19', 'h20', 'h21']} />
        </div>

        <aside className="flex w-12 shrink-0 items-start border-t-2 border-t-[#aca899] pl-1">
          <span className="h-full w-[2px] border-l border-l-[#aca899] bg-black" />
          <div className="flex h-full grow items-start bg-[#eeedea] pl-[2px]">
            <div role="tablist" className="flex h-[616px] max-h-full w-4 flex-col">
              {PALETTE.map((label, i) => (
                <button
                  key={label}
                  role="tab"
                  type="button"
                  aria-selected={i === 6}
                  className={
                    i === 6
                      ? 'flex min-h-0 w-4 flex-1 items-center justify-center rounded-l-[5px] border border-r-0 border-[#aca899] font-bold'
                      : 'flex min-h-0 w-4 flex-1 items-center justify-center rounded-l-[5px] border border-[#aca899] bg-[#ece9d8]'
                  }
                >
                  <span className="rotate-180 whitespace-nowrap [text-orientation:sideways] [writing-mode:vertical-rl]">{label}</span>
                </button>
              ))}
            </div>
            <button type="button" aria-label="close palette" className="mt-1 ml-[7px] h-[10px] w-[10px] border border-[#333] bg-white">
              <svg width="8" height="8" className="block" aria-hidden="true"><path d="M1 1l6 6M7 1L1 7" stroke="#000" strokeWidth="1.800" /></svg>
            </button>
          </div>
        </aside>
      </main>

      <div className="h-2 shrink-0 border-t-2 border-b border-t-[#fbfaf4] border-b-black shadow-[inset_0_-1px_0_#aca899]" />

      <section className="flex h-[56px] shrink-0 pt-[5px] pr-2 pl-[6px]">
        <span className="flex h-[44px] w-[11px]"><span className="flex h-full gap-[2px]"><span className="w-[3px] border-r border-l border-r-[#aca899] border-l-white" /><span className="w-[3px] border-r border-l border-r-[#aca899] border-l-white" /></span></span>
        <div className="flex h-12 grow flex-col border-t border-l border-t-black border-l-black bg-white text-[13px]">
          <div className="flex h-[31px] border-b border-b-[#aca899]">
            <div className="grow pl-[2px] font-['Liberation_Mono','Noto_Sans_CJK_SC',monospace] leading-[14px]">
              <p className="flex"><span className="w-[46px]">命令:</span>ampoweredit</p>
              <p>命令:</p>
            </div>
            <div className="flex flex-col"><ScrollBtn dir="up" /><ScrollBtn dir="down" /></div>
          </div>
          <div className="flex h-4 items-center pr-[18px]">
            <label htmlFor="cmd" className="pl-[2px] font-['Liberation_Mono','Noto_Sans_CJK_SC',monospace]">命令:</label>
            <input id="cmd" type="text" className="h-4 min-w-0 grow bg-transparent pl-2 outline-none" />
            <div className="flex w-[66px] items-center gap-px bg-[#f6f5f0] pr-[2px] pl-px"><ScrollBtn dir="left" /><Thumb /><div className="grow" /><ScrollBtn dir="right" /></div>
          </div>
        </div>
      </section>

      <section className="relative flex h-[22px] shrink-0 items-center border-t border-t-[#aca899] pl-[5px] shadow-[inset_0_1px_0_#fff]">
        <div className="mt-[2px] h-[18px] w-[350px] border border-t-[#aca899] border-r-white border-b-white border-l-[#aca899] pl-px whitespace-pre">4587.81, 1633.75, 0.00</div>
        <div className="absolute -top-[4px] left-[227px] z-10 flex h-[25px] w-[126px] border-2 border-t-[#e8e8e8] border-r-[#404040] border-b-[#404040] border-l-[#e8e8e8] bg-[#c8c8c8]">
          <button type="button" aria-label="input method" className="flex w-[22px] items-center justify-center border-r border-r-[#555]"><Icon name="ime" size={17} /></button>
          <button type="button" className="w-[39px] border-r border-r-[#555] text-[16px] leading-5">标准</button>
          <button type="button" aria-label="half width" className="flex w-5 items-center justify-center border-r border-r-[#555]"><Icon name="moon" size={16} /></button>
          <button type="button" aria-label="punctuation" className="flex w-5 items-center justify-center border-r border-r-[#555]"><Icon name="comma" size={16} /></button>
          <button type="button" aria-label="keyboard" className="flex grow items-center justify-center"><Icon name="keys" size={18} /></button>
        </div>
        <div className="mt-[2px] flex gap-1">
          {STATUS.map(([l, on]) => <StatusBtn key={l} label={l} on={on} />)}
          <span className="w-4" />
          {STATUS2.map(([l, on]) => <StatusBtn key={l} label={l} on={on} />)}
        </div>
        <div className="grow" />
        <div className="mt-[2px] flex h-[18px] items-center gap-[3px] border border-t-[#aca899] border-r-white border-b-white border-l-[#aca899] px-[2px]">
          <Icon name="dish" size={17} />
          <Icon name="swap" size={17} />
          <Icon name="padlock" size={17} />
        </div>
        <button type="button" aria-label="tray settings" className="flex h-4 w-4 items-end justify-center pb-px">
          <svg width="7" height="4" aria-hidden="true"><path d="M0 0h7L3.500 4z" fill="#000" /></svg>
        </button>
      </section>

      <footer className="flex h-[30px] shrink-0 items-center bg-[linear-gradient(180deg,#4c8cf8_0%,#2a62e0_12%,#245bdb_60%,#2258d8_88%,#1c48b0_100%)] text-white">
        <button type="button" className="flex h-full w-24 items-center gap-[6px] rounded-r-[10px] bg-[linear-gradient(180deg,#68b868_0%,#3c9c3c_15%,#34943c_70%,#246c28_100%)] pl-[10px] text-[18px] italic shadow-[2px_0_3px_#1c48a8] [text-shadow:1px_1px_1px_#184818]">
          <svg width="20" height="19" viewBox="0 0 20 19" aria-hidden="true">
            <path d="M3 2c3-2 5-1 7 0L8 9C6 8 4 8 1 9z" fill="#f06030" />
            <path d="M11 2.500c3 1.500 5 1 8 0L17 9c-3 1.500-5 1.500-8 0z" fill="#88d040" />
            <path d="M1 10c3-1.500 5-1 7 0l-2 7c-2-1-4-1.500-7 0z" fill="#60a0f8" />
            <path d="M9 10.500c3 1.500 5 1 8 0l-2 7c-3 1-5 1-8-.5z" fill="#f8d030" />
          </svg>
          <span className="leading-6">开始</span>
        </button>
        <div className="flex items-center gap-[6px] pl-[11px]">
          <Icon name="ie" /><Icon name="outlook" /><Icon name="calc" />
        </div>
        <span className="w-[25px] pb-2 pl-2 text-[14px]">»</span>
        <div className="flex gap-px">
          <TaskBtn icon="play" label="AutoCAD Mechanic..." />
          <TaskBtn icon="gear" label="专业工具" />
          <TaskBtn icon="acad" label="AutoCAD Mechanic..." active />
        </div>
        <div className="grow" />
        <div className="flex items-center gap-[5px] pr-3">
          <Icon name="ime" size={17} /><Icon name="ask" size={17} /><Icon name="restore" />
        </div>
        <div className="flex h-full items-center gap-px border-l border-l-[#1040a0] bg-[linear-gradient(180deg,#3cb4f8_0%,#129aec_15%,#1290e8_80%,#0c6cc0_100%)] pr-3 pl-2">
          <Icon name="net" /><Icon name="umbrella" /><Icon name="shield" />
          <time className="pl-1 whitespace-pre">下午 13:10</time>
        </div>
      </footer>
    </div>
  );
}
